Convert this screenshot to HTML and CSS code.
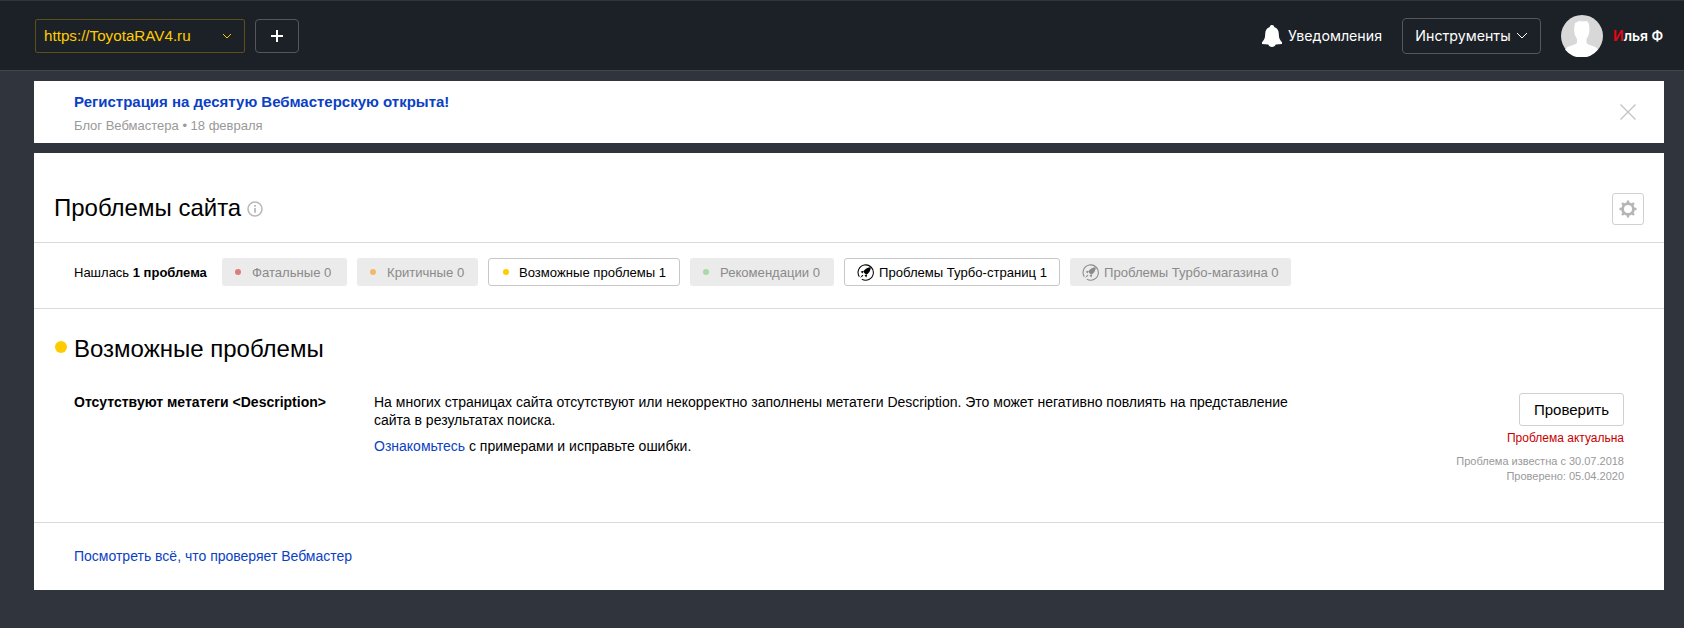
FILE: index.html
```html
<!DOCTYPE html>
<html lang="ru">
<head>
<meta charset="utf-8">
<title>Проблемы сайта</title>
<link rel="stylesheet" href="styles.css">
</head>
<body>
<header class="topbar">
  <div class="site-select">
    <span class="site-url">https://ToyotaRAV4.ru</span>
    <svg class="chev" width="10" height="6" viewBox="0 0 10 6"><path d="M1 1l4 4 4-4" fill="none" stroke="#ffcc00" stroke-width="1"/></svg>
  </div>
  <div class="add-btn"><svg width="14" height="14" viewBox="0 0 14 14"><path d="M7 1v12M1 7h12" stroke="#fff" stroke-width="2"/></svg></div>
  <div class="spacer"></div>
  <div class="notif">
    <svg width="20" height="22" viewBox="0 0 20 22"><path fill="#fff" d="M10 0c1.300 0 2.200.9 2.200 2 3 .9 4.600 3.500 4.600 7 0 4 1 6 3.200 8.300V19l-6.300.6C13.200 21 11.800 22 10 22s-3.200-1-3.700-2.400L0 19v-1.700C2.200 15 3.200 13 3.200 9c0-3.500 1.600-6.100 4.600-7C7.800.9 8.700 0 10 0z"/></svg>
    <span>Уведомления</span>
  </div>
  <div class="tools">Инструменты
    <svg width="12" height="7" viewBox="0 0 12 7"><path d="M1 1l5 5 5-5" fill="none" stroke="#fff" stroke-width="1"/></svg>
  </div>
  <div class="avatar">
    <svg width="42" height="42" viewBox="0 0 42 42"><circle cx="21" cy="21" r="21" fill="#d8d8d8"/><path fill="#fff" d="M14 8l4-2 5 .5 3-.5 2 3 .5 6-.8 5-2.200 4v4l2 1.500 7 2.500 2.500 2.500A21 21 0 0 1 4 34.500L6.500 32l7-2.500L16 28v-4l-2.200-4-.8-6z"/></svg>
  </div>
  <div class="user"><span class="user-first">И</span>лья Ф</div>
</header>

<main class="content">
  <section class="banner">
    <div class="banner-text">
      <a class="banner-title">Регистрация на десятую Вебмастерскую открыта!</a>
      <div class="banner-meta">Блог Вебмастера • 18 февраля</div>
    </div>
    <svg class="close" width="16" height="16" viewBox="0 0 16 16"><path d="M.5.5l15 15M15.500.5l-15 15" stroke="#c4c4c4" stroke-width="1.400"/></svg>
  </section>

  <section class="card">
    <div class="card-head">
      <h1 class="page-title">Проблемы сайта</h1>
      <svg class="info" width="16" height="16" viewBox="0 0 16 16"><circle cx="8" cy="8" r="7" fill="none" stroke="#b8b8b8" stroke-width="1.500"/><path d="M8 7v4.800M8 4v1.800" stroke="#b8b8b8" stroke-width="1.800"/></svg>
      <div class="spacer"></div>
      <div class="gear-btn">
        <svg width="18" height="18" viewBox="0 0 18 18"><circle cx="9" cy="9" r="5.400" fill="none" stroke="#b5b5b5" stroke-width="2.800"/><path d="M9 .5v3M9 14.500v3M.5 9h3M14.500 9h3M3 3l2.100 2.100M12.900 12.900L15 15M3 15l2.100-2.100M12.900 5.100L15 3" stroke="#b5b5b5" stroke-width="2.400"/></svg>
      </div>
    </div>

    <div class="filters">
      <div class="found">Нашлась <b>1 проблема</b></div>
      <div class="chip off chip-fatal"><i class="dot red"></i>Фатальные 0</div>
      <div class="chip off chip-crit"><i class="dot orange"></i>Критичные 0</div>
      <div class="chip on chip-poss"><i class="dot yellow"></i>Возможные проблемы 1</div>
      <div class="chip off chip-rec"><i class="dot green"></i>Рекомендации 0</div>
      <div class="chip on chip-turbo">
        <svg class="rocket" width="17" height="17" viewBox="0 0 16 16"><path d="M2.200 12A7.200 7.200 0 1 1 4.500 14.200" fill="none" stroke="currentColor" stroke-width="1"/><path fill="currentColor" d="M13 3C10 3 7.200 4.800 5.800 7.400l2.800 2.800C11.200 8.800 13 6 13 3zM5.800 6.400L3.400 7.200l2 1.800zM9.600 10.200l-.8 2.400-1.800-2zM5 10l1 1-3.200 2.200z"/></svg>Проблемы Турбо-страниц 1</div>
      <div class="chip off chip-shop">
        <svg class="rocket" width="17" height="17" viewBox="0 0 16 16"><path d="M2.200 12A7.200 7.200 0 1 1 4.500 14.200" fill="none" stroke="currentColor" stroke-width="1"/><path fill="currentColor" d="M13 3C10 3 7.200 4.800 5.800 7.400l2.800 2.800C11.200 8.800 13 6 13 3zM5.800 6.400L3.400 7.200l2 1.800zM9.600 10.200l-.8 2.400-1.800-2zM5 10l1 1-3.200 2.200z"/></svg>Проблемы Турбо-магазина 0</div>
    </div>

    <div class="issues">
      <h2 class="group-title"><i class="group-dot"></i>Возможные проблемы</h2>
      <div class="issue">
        <div class="issue-name">Отсутствуют метатеги &lt;Description&gt;</div>
        <div class="issue-desc">
          <p>На многих страницах сайта отсутствуют или некорректно заполнены метатеги Description. Это может негативно повлиять на представление сайта в результатах поиска.</p>
          <p class="issue-hint"><a>Ознакомьтесь</a> с примерами и исправьте ошибки.</p>
        </div>
        <div class="issue-side">
          <div class="check-btn">Проверить</div>
          <div class="status">Проблема актуальна</div>
          <div class="dates">Проблема известна с 30.07.2018<br>Проверено: 05.04.2020</div>
        </div>
      </div>
    </div>

    <div class="card-foot"><a>Посмотреть всё, что проверяет Вебмастер</a></div>
  </section>
</main>
</body>
</html>
```
FILE: styles.css
```css
* { box-sizing: border-box; }
html, body { margin: 0; height: 100%; }
body {
  background: #30343c;
  font-family: "Liberation Sans", Arial, sans-serif;
  font-size: 14px;
  color: #000;
  overflow: hidden;
}
a { color: #0b3fc4; text-decoration: none; }
.spacer { flex: 1; }

.topbar {
  height: 71px;
  background: #1c2127;
  border-top: 1px solid #30343c;
  border-bottom: 1px solid #42464c;
  display: flex;
  align-items: center;
  padding: 0 20px 0 35px;
  color: #fff;
}
.site-select {
  width: 210px;
  height: 34px;
  border: 1px solid #5b4f1a;
  border-radius: 2px;
  display: flex;
  align-items: center;
  justify-content: space-between;
  padding: 0 12px 0 8px;
  color: #ffcc00;
  font-size: 15.200px;
}
.add-btn {
  width: 44px;
  height: 34px;
  margin-left: 10px;
  border: 1px solid #53575c;
  border-radius: 4px;
  display: flex;
  align-items: center;
  justify-content: center;
}
.notif { display: flex; align-items: center; gap: 6px; font-family: Inter, "Liberation Sans", sans-serif; font-size: 14.200px; font-weight: 400; margin-right: 20px; }
.tools {
  width: 139px;
  height: 36px;
  border: 1px solid #53575c;
  border-radius: 4px;
  display: flex;
  align-items: center;
  justify-content: center;
  gap: 5px;
  font-family: Inter, "Liberation Sans", sans-serif;
  font-size: 14.200px;
  font-weight: 400;
  margin-right: 20px;
}
.avatar { width: 42px; height: 42px; margin-right: 10px; }
.avatar svg { display: block; }
.user { font-family: Inter, "Liberation Sans", sans-serif; font-size: 14px; font-weight: 600; width: 51px; white-space: nowrap; }
.user-first { color: #e30613; }

.content { padding: 10px 20px 0 34px; }
.banner {
  height: 62px;
  background: #fff;
  display: flex;
  align-items: center;
  justify-content: space-between;
  padding: 0 28px 0 40px;
}
.banner-text { padding-top: 2px; }
.banner-title { display: block; font-weight: 700; font-size: 15px; line-height: 18px; color: #0b3fc4; }
.banner-meta { margin-top: 7px; font-size: 13px; line-height: 16px; color: #999; }
.card { margin-top: 10px; background: #fff; height: 437px; display: flex; flex-direction: column; }
.card-head {
  height: 90px;
  flex: none;
  display: flex;
  align-items: center;
  padding: 39px 20px 18px 20px;
  border-bottom: 1px solid #d9d9d9;
}
.page-title { margin: 0; font-size: 24px; font-weight: 400; line-height: 30px; }
.info { margin-left: 6px; margin-top: 2px; }
.gear-btn {
  width: 32px;
  height: 32px;
  margin-top: 2px;
  border: 1px solid #d0d0d0;
  border-radius: 3px;
  display: flex;
  align-items: center;
  justify-content: center;
}
.filters {
  height: 66px;
  flex: none;
  display: flex;
  align-items: center;
  gap: 10px;
  padding: 0 0 7px 40px;
  border-bottom: 1px solid #d9d9d9;
  font-size: 14px;
}
.found { width: 138px; font-size: 13px; white-space: nowrap; }
.chip {
  height: 28px;
  border-radius: 3px;
  display: flex;
  align-items: center;
  font-size: 13.100px;
  white-space: nowrap;
}
.chip.off { background: #ebebeb; color: #8a8a8a; }
.chip.on { background: #fff; border: 1px solid #c8c8c8; color: #000; }
.chip-fatal { width: 125px; padding-left: 13px; }
.chip-crit { width: 121px; padding-left: 13px; }
.chip-poss { width: 192px; padding-left: 14px; }
.chip-poss .dot { margin-right: 10px; }
.chip-rec { width: 144px; padding-left: 13px; }
.chip-turbo { width: 216px; padding-left: 12px; }
.chip-shop { width: 221px; padding-left: 12px; }
.dot { width: 6px; height: 6px; border-radius: 50%; margin-right: 11px; flex: none; }
.red { background: #e07a7a; }
.orange { background: #f2b96c; }
.yellow { background: #ffcc00; }
.green { background: #a5dca0; }
.rocket { margin-right: 5px; flex: none; }
.chip.off .rocket { color: #8a8a8a; }

.issues { flex: 1; padding: 25px 40px 0 21px; border-bottom: 1px solid #d9d9d9; }
.group-title {
  margin: 0;
  font-size: 24px;
  font-weight: 400;
  line-height: 30px;
  display: flex;
  align-items: center;
}
.group-dot { width: 12px; height: 12px; border-radius: 50%; background: #ffcc00; margin-right: 7px; margin-top: -4px; flex: none; }
.issue { display: flex; margin-top: 29px; padding-left: 19px; }
.issue-name { width: 300px; font-weight: 700; font-size: 14px; line-height: 18px; flex: none; }
.issue-desc { width: 930px; flex: none; font-size: 14px; line-height: 18px; }
.issue-desc p { margin: 0; }
.issue-desc .issue-hint { margin-top: 8px; }
.issue-side { flex: 1; display: flex; flex-direction: column; align-items: flex-end; margin-top: 0; }
.check-btn {
  width: 105px;
  height: 33px;
  border: 1px solid #d0d0d0;
  border-radius: 3px;
  display: flex;
  align-items: center;
  justify-content: center;
  font-size: 15px;
}
.status { margin-top: 4px; font-size: 12px; line-height: 16px; color: #c80000; }
.dates { margin-top: 8px; font-size: 11px; line-height: 15px; color: #999; text-align: right; }
.card-foot { height: 67px; flex: none; display: flex; align-items: center; padding: 0 0 2px 40px; font-size: 14px; }
```
